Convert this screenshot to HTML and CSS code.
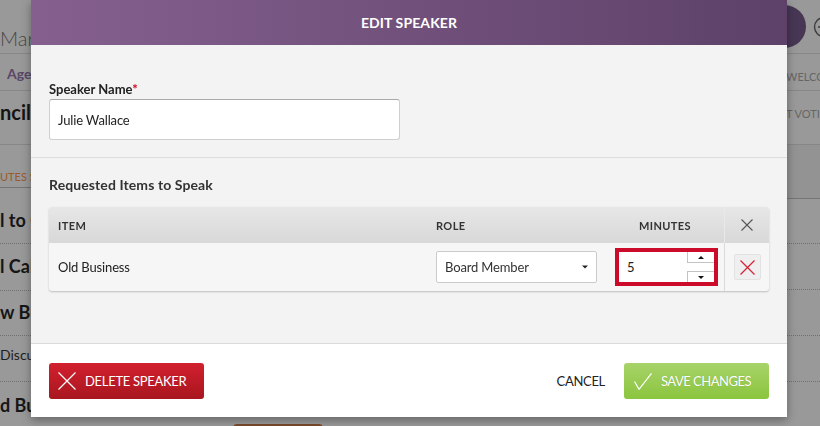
FILE: index.html
```html
<!DOCTYPE html>
<html lang="en">
<head>
<meta charset="utf-8">
<title>Edit Speaker</title>
<link rel="stylesheet" href="styles.css">
</head>
<body>
<div class="page">
  <div class="col col-left">
    <div class="row r1"><span class="brand">Marketing Board</span></div>
    <div class="row r2"><span class="nav">Agenda</span></div>
    <div class="row r3"><span class="heading">ncil Meeting</span></div>
    <div class="row r4 tabbar"><span class="tab">UTES SPEAKERS</span></div>
    <div class="row r5 dotted"><span class="item">l to Order</span></div>
    <div class="row r6 dotted"><span class="item">l Call</span></div>
    <div class="row r7 dotted"><span class="item">w Business</span></div>
    <div class="row r8 dotted"><span class="sub">Discussion</span></div>
    <div class="row r9"><span class="item">d Business</span></div>
  </div>
  <div class="col col-mid"><div class="mid-btn"></div></div>
  <div class="col col-right">
    <div class="row rr1">
      <span class="avatar"></span>
      <svg class="round-icon" width="22" height="22" viewBox="0 0 22 22"><circle cx="11" cy="11" r="9.5" fill="none" stroke="#3d3d3d" stroke-width="1.4"/><path d="M5 11h4" stroke="#3d3d3d" stroke-width="1.4"/></svg>
    </div>
    <div class="row rr2"><span class="small">WELCOME</span></div>
    <div class="row rr3"><span class="small">T VOTING</span></div>
    <div class="row rr4 band"></div>
    <div class="row rr5 dotted"></div>
    <div class="row rr6 dotted"></div>
    <div class="row rr7 dotted"></div>
    <div class="row rr8 dotted"></div>
  </div>
</div>

<div class="modal">
  <div class="modal-header">EDIT SPEAKER</div>
  <div class="modal-body">
    <section class="name-section">
      <label class="field-label" for="speaker">Speaker Name<span class="req">*</span></label>
      <input id="speaker" class="text-input" type="text" value="Julie Wallace">
    </section>
    <section class="items-section">
      <h3 class="section-title">Requested Items to Speak</h3>
      <div class="table">
        <div class="thead">
          <div class="cell c-item">ITEM</div>
          <div class="cell c-role">ROLE</div>
          <div class="cell c-min">MINUTES</div>
          <div class="cell c-x">
            <svg width="12" height="12" viewBox="0 0 12 12"><path d="M0.5 0.5L11.5 11.5M11.5 0.5L0.5 11.5" stroke="#555" stroke-width="1.1"/></svg>
          </div>
        </div>
        <div class="trow">
          <div class="cell c-item">Old Business</div>
          <div class="cell c-role">
            <div class="select"><span>Board Member</span>
              <svg width="6" height="4" viewBox="0 0 6 4"><path d="M0 0.5h6L3 3.5z" fill="#222"/></svg>
            </div>
          </div>
          <div class="cell c-min">
            <div class="num">
              <span class="num-val">5</span>
              <div class="spin">
                <div class="spin-btn up"><svg width="6" height="3" viewBox="0 0 6 3"><path d="M0 3h6L3 0z" fill="#111"/></svg></div>
                <div class="spin-btn down"><svg width="6" height="3" viewBox="0 0 6 3"><path d="M0 0h6L3 3z" fill="#111"/></svg></div>
              </div>
            </div>
          </div>
          <div class="cell c-x">
            <div class="row-del">
              <svg width="15" height="15" viewBox="0 0 15 15"><path d="M0.5 0.5L14.5 14.5M14.5 0.5L0.5 14.5" stroke="#d3243a" stroke-width="1.3"/></svg>
            </div>
          </div>
        </div>
      </div>
    </section>
  </div>
  <div class="modal-footer">
    <button class="btn btn-delete" type="button">
      <svg width="18" height="18" viewBox="0 0 18 18"><path d="M0.5 0.5L17.5 17.5M17.5 0.5L0.5 17.5" stroke="#fff" stroke-width="1.2"/></svg>
      <span>DELETE SPEAKER</span>
    </button>
    <div class="footer-right">
      <button class="link-btn" type="button">CANCEL</button>
      <button class="btn btn-save" type="button">
        <svg width="18" height="17" viewBox="0 0 18 17"><path d="M0.5 8.5L5 16.3L17.5 0.4" fill="none" stroke="#fff" stroke-width="1.2"/></svg>
        <span>SAVE CHANGES</span>
      </button>
    </div>
  </div>
</div>
</body>
</html>
```

FILE: styles.css
```css
html, body {
  margin: 0;
  padding: 0;
  overflow: hidden;
}
body {
  font-family: Lato, "Liberation Sans", sans-serif;
  background: #999;
}

/* ---------- dimmed page behind the dialog ---------- */
.page {
  display: flex;
  height: 426px;
  background: #999;
  overflow: hidden;
}
.col { flex: none; }
.col-left { width: 31px; overflow: hidden; }
.col-mid { flex: 1; padding-top: 424px; }
.col-right { width: 36px; overflow: hidden; }

.row {
  box-sizing: border-box;
  white-space: nowrap;
  border-bottom: 1px solid #878787;
}
.row.dotted { border-bottom: 1px dotted #707070; }

.r1 { height: 54px; padding-top: 26px; }
.r2 { height: 37px; padding-top: 9px; }
.r3 { height: 54px; padding-top: 9px; }
.r4 { height: 43px; padding-top: 20px; border-bottom-color: #747474; }
.r5 { height: 56px; padding-top: 21px; }
.r6 { height: 47px; padding-top: 11px; }
.r7 { height: 45px; padding-top: 10px; }
.r8 { height: 46px; padding-top: 8px; }
.r9 { height: 44px; padding-top: 12px; border-bottom: 0; }

.brand { font-size: 20px; line-height: 24px; font-weight: 300; color: #464646; }
.nav { margin-left: 7px; font-size: 14px; line-height: 17px; font-weight: 700; color: #5a4769; }
.heading { font-size: 20px; line-height: 24px; font-weight: 700; color: #141414; }
.tab { font-size: 11px; line-height: 13px; color: #9a5a2b; }
.item { font-size: 18px; line-height: 22px; font-weight: 700; color: #161616; }
.sub { font-size: 14px; line-height: 17px; color: #1e1e1e; }

.mid-btn {
  margin-left: 202px;
  width: 90px;
  height: 20px;
  border-radius: 4px;
  background: #7a4a2c;
}

.rr1 { height: 54px; display: flex; align-items: flex-start; overflow: visible; }
.rr2 { height: 37px; padding-top: 11px; }
.rr3 { height: 54px; padding-top: 11px; }
.rr4 { height: 54px; }
.rr5 { height: 45px; }
.rr6 { height: 46px; }
.rr7 { height: 46px; }
.rr8 { height: 46px; }
.band { background: #939393; border-bottom-color: #757575; }

.col-right { overflow: visible; }
.avatar {
  flex: none;
  width: 43px;
  height: 43px;
  margin: 5px 0 0 -21px;
  border-radius: 50%;
  background: #473755;
}
.round-icon { flex: none; margin: 16px 0 0 7px; }
.small { margin-left: 2px; font-size: 11px; line-height: 13px; color: #666; }

/* ---------- dialog ---------- */
.modal {
  position: fixed;
  top: 0;
  left: 31px;
  z-index: 10;
  width: 756px;
  height: 417px;
  display: flex;
  flex-direction: column;
  background: #f3f3f3;
  box-shadow: 0 3px 9px rgba(0, 0, 0, 0.35);
}
.modal-header {
  flex: none;
  height: 45px;
  line-height: 45px;
  text-align: center;
  color: #fff;
  font-size: 14px;
  font-weight: 700;
  letter-spacing: 0.1px;
  background: linear-gradient(90deg, #85608f 0%, #5d4168 100%);
}
.modal-body {
  flex: 1;
  display: flex;
  flex-direction: column;
}
.name-section {
  padding: 36px 18px 17px;
  border-bottom: 1px solid #dcdcdc;
}
.field-label {
  display: block;
  margin-bottom: 2px;
  font-size: 13px;
  line-height: 16px;
  font-weight: 700;
  color: #222;
}
.req { color: #d0021b; }
.text-input {
  display: block;
  box-sizing: border-box;
  width: 351px;
  height: 41px;
  margin: 0;
  padding: 0 8px;
  border: 1px solid #cfcfcf;
  border-top-color: #a9a9a9;
  border-radius: 3px;
  background: #fff;
  font-family: Lato, "Liberation Sans", sans-serif;
  font-size: 13px;
  letter-spacing: -0.15px;
  color: #222;
  outline: none;
}

.items-section { padding: 19px 18px 0; }
.section-title {
  margin: 0 0 14px;
  font-size: 14px;
  line-height: 16px;
  font-weight: 700;
  letter-spacing: 0.1px;
  color: #333;
}
.table {
  border-radius: 3px;
  overflow: hidden;
  background: #f6f6f6;
  box-shadow: 0 1px 2px rgba(0, 0, 0, 0.22);
}
.thead, .trow {
  display: grid;
  grid-template-columns: 378px 179px 118px 45px;
}
.thead {
  height: 36px;
  background: linear-gradient(#e7e7e7, #d8d8d8);
  font-size: 11px;
  font-weight: 700;
  letter-spacing: 0.4px;
  color: #333;
}
.trow {
  height: 48px;
  font-size: 13px;
  letter-spacing: -0.15px;
  color: #222;
}
.cell {
  display: flex;
  align-items: center;
  padding-left: 9px;
}
.thead .c-min { justify-content: center; padding-left: 0; }
.c-x {
  justify-content: center;
  padding-left: 0;
  border-left: 1px solid #dadada;
}
.thead .c-x { border-left-color: #e9e9e9; }

.select {
  box-sizing: border-box;
  width: 161px;
  height: 32px;
  display: flex;
  align-items: center;
  justify-content: space-between;
  padding: 0 8px;
  background: #fff;
  border: 1px solid #cbcbcb;
  border-radius: 2px;
  color: #333;
}

.num {
  box-sizing: border-box;
  width: 103px;
  height: 38px;
  display: flex;
  justify-content: space-between;
  border: 4px solid #cc0a2a;
  background: #fff;
}
.num-val {
  align-self: center;
  padding-left: 8px;
  color: #222;
}
.spin {
  width: 27px;
  display: flex;
  flex-direction: column;
  justify-content: space-between;
}
.spin-btn {
  box-sizing: border-box;
  height: 11px;
  display: flex;
  align-items: center;
  justify-content: center;
  border-left: 1px solid #c3c3c3;
  background: #fff;
}
.spin-btn.up { border-bottom: 1px solid #c3c3c3; }
.spin-btn.down { border-top: 1px solid #c3c3c3; }

.row-del {
  box-sizing: border-box;
  width: 27px;
  height: 26px;
  margin-left: 1px;
  display: flex;
  align-items: center;
  justify-content: center;
  background: #efefef;
  border: 1px solid #e2e2e2;
  border-radius: 2px;
}

.modal-footer {
  flex: none;
  display: flex;
  align-items: center;
  justify-content: space-between;
  padding: 19px 18px 18px;
  border-top: 1px solid #dadada;
  background: #fff;
}
.footer-right {
  display: flex;
  align-items: center;
  gap: 19px;
}
.btn {
  height: 36px;
  display: inline-flex;
  align-items: center;
  gap: 9px;
  margin: 0;
  border: 0;
  border-radius: 3px;
  color: #fff;
  font-family: Lato, "Liberation Sans", sans-serif;
  font-size: 13px;
  cursor: pointer;
}
.btn-delete {
  padding: 0 18px 0 9px;
  letter-spacing: -0.3px;
  background: linear-gradient(#d2202e, #a8161f);
}
.btn-save {
  padding: 0 18px 0 10px;
  letter-spacing: -0.5px;
  background: linear-gradient(#a7d369, #8bc53e);
  text-shadow: 0 0 1px rgba(0, 0, 0, 0.2);
}
.link-btn {
  margin: 0;
  padding: 0;
  border: 0;
  background: none;
  font-family: Lato, "Liberation Sans", sans-serif;
  font-size: 13px;
  letter-spacing: -0.3px;
  color: #222;
  cursor: pointer;
}
```
